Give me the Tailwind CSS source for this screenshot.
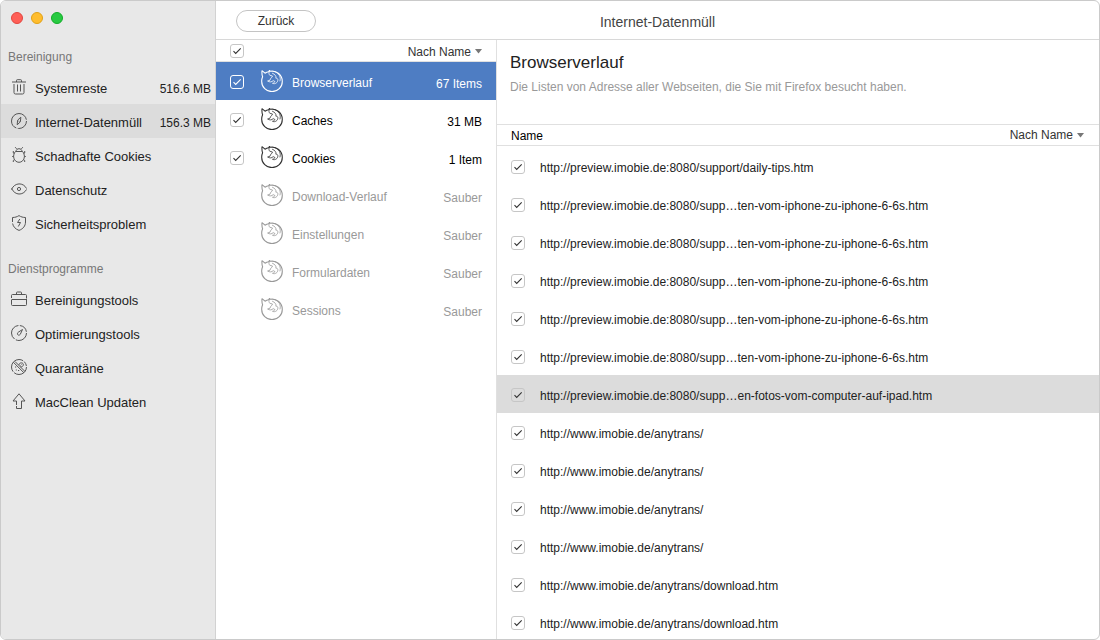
<!DOCTYPE html>
<html lang="de">
<head>
<meta charset="utf-8">
<meta name="viewport" content="width=device-width, initial-scale=1">
<title>MacClean – Internet-Datenmüll</title>
<script src="https://cdn.jsdelivr.net/npm/@tailwindcss/browser@4"></script>
</head>
<body class="bg-white">
<svg class="hidden" aria-hidden="true">
  <symbol id="check" viewBox="0 0 14 14"><path d="M3.500 7.200 5.700 9.400l5-5" fill="none" stroke="currentColor" stroke-width="1.100"/></symbol>
  <symbol id="caret" viewBox="0 0 7 5"><path d="M0 0h7L3.500 4.600z" fill="currentColor"/></symbol>
  <symbol id="fox" viewBox="0 0 22 22"><g fill="none" stroke="currentColor" stroke-linejoin="round" stroke-linecap="round"><path stroke-width="1.100" d="M1 .7 4 3.200C5.300 2.300 6.400 1.900 7.600 1.700L8.500.5 9.300 1.300C15.500.2 21.300 5 21.300 11.400A10.300 10.200 0 0 1 .7 11.400C.6 9.600 1 8.100 1.600 6.700.9 4.800.8 2.800 1 .7z"/><path stroke-width=".8" d="M8.500 1.300C7.600 2.800 7.900 4.200 8.700 5.200L11.500 6C11.300 7.500 9.300 8 9 10.200L6.600 11C8.500 12.300 10.800 12.200 12.200 10.600L13.900 11.500C13.600 12.500 12.700 13 11.500 13.300 14.300 14.500 16.800 12.500 16.900 9.900 16.900 8.700 16 8.100 14.900 8.200 15.400 6.100 14 4.300 11.500 3.300M14 1.800C18.200 3.300 20.200 7.200 19 11"/></g></symbol>
  <symbol id="trash" viewBox="0 0 16 16"><g fill="none" stroke="currentColor" stroke-width="1"><path d="M1 3h14M5.500 3V1.500q0-.8.8-.8h3.400q.8 0 .8.800V3M3 5v8.500q0 1.500 1.500 1.500h7q1.500 0 1.500-1.500V5M6.500 5.500v7M9.500 5.500v7"/></g></symbol>
  <symbol id="compass" viewBox="0 0 16 16"><g fill="none" stroke="currentColor" stroke-width="1"><circle cx="8" cy="8" r="7.500" stroke-dasharray="13 1.500 31 1.600"/><path d="M9.800 4.200 6.600 7.200 6.200 11.800 9.400 8.800zM7.500 8l1 .4"/></g></symbol>
  <symbol id="bug" viewBox="0 0 16 16"><g fill="none" stroke="currentColor" stroke-width="1"><path d="M4.200.2 5.600 1.800M11.800.2l-1.400 1.600M5 4.500C5 .8 11 .8 11 4.500M2.300 4v2l1 .8M13.700 4v2l-1 .8M1.200 9.500h1.500M14.800 9.500h-1.500M2.300 15v-1.500l1.200-1M13.700 15v-1.500l-1.200-1"/><path d="M4.500 4.500h7C15 8 13.500 15.200 8 15.300 2.500 15.200 1 8 4.500 4.500z"/></g></symbol>
  <symbol id="eye" viewBox="0 0 16 16"><g fill="none" stroke="currentColor" stroke-width="1"><path d="M.5 8.500C3.600 1.200 12.400 1.200 15.500 7.500M.6 7.500C4 14.700 12 14.700 15.500 8.500"/><circle cx="8" cy="8" r="1.600"/></g></symbol>
  <symbol id="shield" viewBox="0 0 16 16"><g fill="none" stroke="currentColor" stroke-width="1"><path d="M1.500 7V2.500C4 2.500 6.200 1.800 8 .6c1.800 1.200 4 1.900 6.500 1.900V7c0 4-2.500 7-6.500 8.400C4.600 14.200 2.200 11.800 1.600 8.500"/><path d="M8.800 4 6.500 7.500h3L7.300 11.500"/></g></symbol>
  <symbol id="case" viewBox="0 0 16 16"><g fill="none" stroke="currentColor" stroke-width="1"><path d="M.5 7V4.500q0-1 1-1h13q1 0 1 1V7M.5 9v4.500q0 1 1 1h13q1 0 1-1V7.500M.5 8.500h15M5.500 3.500V1.800q0-.8.8-.8h3.400q.8 0 .8.800v1.700"/></g></symbol>
  <symbol id="gauge" viewBox="0 0 16 16"><g fill="none" stroke="currentColor" stroke-width="1"><circle cx="8" cy="8" r="7.500" stroke-dasharray="15 1.500 18 1.500 9.600 1.500"/><path d="M11.500 4.500 9.300 9.300C8.300 10.800 6 10.300 6.500 8.300c.1-.5.4-.8.8-1.100z"/></g></symbol>
  <symbol id="germ" viewBox="0 0 16 16"><g fill="none" stroke="currentColor" stroke-width="1"><circle cx="8" cy="8" r="7.500" stroke-dasharray="17 1.400 21 1.400 5 1.300"/><path d="M2.300 3.200 13 13.900M4 2.500 13.800 12.300M8 6c-.2-2.300 3.800-3 4.300-.8.400 2-1.400 2.800-2.800 2.600M10.500 5.500l-1 1"/><path d="M4 8h1.200M7 11.500h1.200M4.800 11h1"/></g></symbol>
  <symbol id="up" viewBox="0 0 16 16"><path d="M5.500 12V8H2L8 .8 14 8h-3.500v7.500h-5V13" fill="none" stroke="currentColor" stroke-width="1"/></symbol>
</svg>

<div class="flex h-screen overflow-hidden rounded-md border border-[#cacaca] font-['Liberation_Sans',Arial,sans-serif] text-[13px] leading-4 text-[#222]">
  <aside class="flex w-[215px] shrink-0 flex-col border-r border-[#d2d2d2] bg-[#e8e8e8]">
    <div class="flex h-[34px] items-center gap-2 px-[10px]">
      <button aria-label="Schließen" class="size-3 rounded-full border border-[#e2463f] bg-[#ff5f57]"></button>
      <button aria-label="Minimieren" class="size-3 rounded-full border border-[#e1a116] bg-[#ffbd2e]"></button>
      <button aria-label="Maximieren" class="size-3 rounded-full border border-[#12ac28] bg-[#28ca42]"></button>
    </div>
    <nav id="nav"></nav>
  </aside>

  <main class="flex min-w-0 grow flex-col">
    <header class="grid h-[39px] shrink-0 grid-cols-[1fr_auto_1fr] items-center border-b border-[#d8d8d8] px-5 pt-px">
      <button class="h-[22px] w-20 rounded-full border border-[#c4c4c4] bg-white text-[12px] text-[#333]">Zurück</button>
      <h1 class="pt-[3px] text-[14px] text-[#444]">Internet-Datenmüll</h1>
    </header>
    <div class="flex min-h-0 grow">
      <section class="flex w-[281px] shrink-0 flex-col border-r border-[#e0e0e0]">
        <div class="flex h-[22px] shrink-0 items-center justify-between border-b border-[#e0e0e0] px-[14px]">
          <label class="grid size-[14px]"><input type="checkbox" checked aria-label="Alle auswählen" class="col-start-1 row-start-1 size-[14px] appearance-none rounded-[3px] border border-[#c6c6c6] bg-white"><svg class="col-start-1 row-start-1 size-[14px] text-[#333]"><use href="#check"/></svg></label>
          <span class="flex items-center gap-1 pt-[2px] text-[12px] text-[#333]"><select aria-label="Sortierung der Kategorien" class="appearance-none [field-sizing:content]"><option>Nach Name</option></select><svg class="h-[5px] w-[7px] text-[#777]"><use href="#caret"/></svg></span>
        </div>
        <ul id="cats"></ul>
      </section>
      <section class="flex min-w-0 grow flex-col">
        <div class="h-[85px] shrink-0 border-b border-[#e0e0e0] px-[13px] pt-[11px]">
          <h2 class="text-[17px] leading-6 text-[#222]">Browserverlauf</h2>
          <p class="pt-1 text-[12px] text-[#999]">Die Listen von Adresse aller Webseiten, die Sie mit Firefox besucht haben.</p>
        </div>
        <div class="flex h-[21px] shrink-0 items-center justify-between border-b border-[#e0e0e0] pr-[15px] pl-[14px] text-[12px]">
          <span class="pt-px text-black">Name</span>
          <span class="flex items-center gap-1 text-[#333]"><select aria-label="Sortierung der Adressen" class="appearance-none [field-sizing:content]"><option>Nach Name</option></select><svg class="h-[5px] w-[7px] text-[#777]"><use href="#caret"/></svg></span>
        </div>
        <ul id="urls" class="min-h-0 grow overflow-hidden pt-px text-[12px]"></ul>
      </section>
    </div>
  </main>
</div>

<script>
const sections = [
  ['Bereinigung', [['trash', 'Systemreste', '516.6 MB'], ['compass', 'Internet-Datenmüll', '156.3 MB', true], ['bug', 'Schadhafte Cookies', ''], ['eye', 'Datenschutz', ''], ['shield', 'Sicherheitsproblem', '']]],
  ['Dienstprogramme', [['case', 'Bereinigungstools', ''], ['gauge', 'Optimierungstools', ''], ['germ', 'Quarantäne', ''], ['up', 'MacClean Updaten', '']]]
];
document.getElementById('nav').innerHTML = sections.map(([title, items]) => `
  <h3 class="flex h-[42px] items-end px-[7px] pb-[5px] text-[12px] text-[#777] first:h-[35px]">${title}</h3>
  <ul>${items.map(([icon, name, size, active]) => `
    <li><a href="#" class="flex h-[34px] items-center gap-2 pr-1 pl-[10px] ${active ? 'bg-[#dcdcdc]' : ''}">
      <svg class="size-4 shrink-0 text-[#555]"><use href="#${icon}"/></svg>
      <span class="grow pt-1">${name}</span><span class="pt-1 text-[12px]">${size}</span>
    </a></li>`).join('')}
  </ul>`).join('');

const cats = [['Browserverlauf', '67 Items', 'active'], ['Caches', '31 MB', 'on'], ['Cookies', '1 Item', 'on'], ['Download-Verlauf', 'Sauber', 'off'], ['Einstellungen', 'Sauber', 'off'], ['Formulardaten', 'Sauber', 'off'], ['Sessions', 'Sauber', 'off']];
const rowColor = { active: 'bg-[#4e7dc3] text-white', on: 'text-black', off: 'text-[#999]' };
const foxColor = { active: 'text-white', on: 'text-[#333]', off: 'text-[#999]' };
const boxColor = { active: 'border-white', on: 'border-[#c6c6c6]' };
const tickColor = { active: 'text-white', on: 'text-[#333]' };
document.getElementById('cats').innerHTML = cats.map(([name, size, state], i) => `
  <li class="flex h-[38px] items-center px-[14px] text-[12px] ${rowColor[state]}">
    <span class="mr-4 flex w-[15px] items-center pt-[2px]">${state === 'off' ? '' : `<span class="grid size-[14px]"><input id="cat${i}" type="checkbox" checked class="col-start-1 row-start-1 size-[14px] appearance-none rounded-[3px] border ${boxColor[state]}"><svg class="pointer-events-none col-start-1 row-start-1 size-[14px] ${tickColor[state]}"><use href="#check"/></svg></span>`}</span>
    <svg class="mr-[9px] size-[22px] shrink-0 ${foxColor[state]}"><use href="#fox"/></svg>
    ${state === 'off' ? `<span class="grow pt-1">${name}</span>` : `<label for="cat${i}" class="grow pt-1">${name}</label>`}
    <span class="pt-[6px]">${size}</span>
  </li>`).join('');

const base = 'http://preview.imobie.de:8080/supp';
const urls = [base + 'ort/daily-tips.htm', ...Array(5).fill(base + '…ten-vom-iphone-zu-iphone-6-6s.htm'), base + '…en-fotos-vom-computer-auf-ipad.htm', ...Array(4).fill('http://www.imobie.de/anytrans/'), ...Array(2).fill('http://www.imobie.de/anytrans/download.htm')];
document.getElementById('urls').innerHTML = urls.map((url, i) => `
  <li class="${i === 6 ? 'bg-[#dcdcdc]' : ''}"><label class="flex h-[38px] items-center gap-[15px] pt-[2px] pl-[14px] whitespace-nowrap">
    <span class="grid size-[14px]"><input type="checkbox" checked class="col-start-1 row-start-1 size-[14px] appearance-none rounded-[3px] border border-[#c6c6c6]"><svg class="col-start-1 row-start-1 size-[14px] text-[#333]"><use href="#check"/></svg></span>
    <span class="pt-px">${url}</span>
  </label></li>`).join('');
</script>
</body>
</html>
